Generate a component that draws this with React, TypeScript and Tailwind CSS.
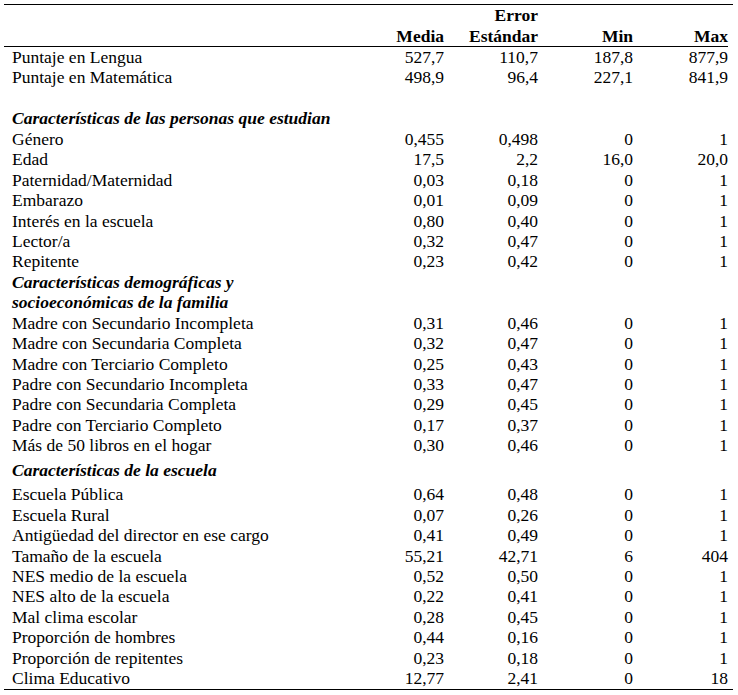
type Row =
  | { kind: "data"; label: string; values: string[] }
  | { kind: "blank" }
  | { kind: "section"; label: string; spaced?: boolean };

const rows: Row[] = [
  { kind: "data", label: "Puntaje en Lengua", values: ["527,7", "110,7", "187,8", "877,9"] },
  { kind: "data", label: "Puntaje en Matemática", values: ["498,9", "96,4", "227,1", "841,9"] },
  { kind: "blank" },
  { kind: "section", label: "Características de las personas que estudian" },
  { kind: "data", label: "Género", values: ["0,455", "0,498", "0", "1"] },
  { kind: "data", label: "Edad", values: ["17,5", "2,2", "16,0", "20,0"] },
  { kind: "data", label: "Paternidad/Maternidad", values: ["0,03", "0,18", "0", "1"] },
  { kind: "data", label: "Embarazo", values: ["0,01", "0,09", "0", "1"] },
  { kind: "data", label: "Interés en la escuela", values: ["0,80", "0,40", "0", "1"] },
  { kind: "data", label: "Lector/a", values: ["0,32", "0,47", "0", "1"] },
  { kind: "data", label: "Repitente", values: ["0,23", "0,42", "0", "1"] },
  { kind: "section", label: "Características demográficas y" },
  { kind: "section", label: "socioeconómicas de la familia" },
  { kind: "data", label: "Madre con Secundario Incompleta", values: ["0,31", "0,46", "0", "1"] },
  { kind: "data", label: "Madre con Secundaria Completa", values: ["0,32", "0,47", "0", "1"] },
  { kind: "data", label: "Madre con Terciario Completo", values: ["0,25", "0,43", "0", "1"] },
  { kind: "data", label: "Padre con Secundario Incompleta", values: ["0,33", "0,47", "0", "1"] },
  { kind: "data", label: "Padre con Secundaria Completa", values: ["0,29", "0,45", "0", "1"] },
  { kind: "data", label: "Padre con Terciario Completo", values: ["0,17", "0,37", "0", "1"] },
  { kind: "data", label: "Más de 50 libros en el hogar", values: ["0,30", "0,46", "0", "1"] },
  { kind: "section", label: "Características de la escuela", spaced: true },
  { kind: "data", label: "Escuela Pública", values: ["0,64", "0,48", "0", "1"] },
  { kind: "data", label: "Escuela Rural", values: ["0,07", "0,26", "0", "1"] },
  { kind: "data", label: "Antigüedad del director en ese cargo", values: ["0,41", "0,49", "0", "1"] },
  { kind: "data", label: "Tamaño de la escuela", values: ["55,21", "42,71", "6", "404"] },
  { kind: "data", label: "NES medio de la escuela", values: ["0,52", "0,50", "0", "1"] },
  { kind: "data", label: "NES alto de la escuela", values: ["0,22", "0,41", "0", "1"] },
  { kind: "data", label: "Mal clima escolar", values: ["0,28", "0,45", "0", "1"] },
  { kind: "data", label: "Proporción de hombres", values: ["0,44", "0,16", "0", "1"] },
  { kind: "data", label: "Proporción de repitentes", values: ["0,23", "0,18", "0", "1"] },
  { kind: "data", label: "Clima Educativo", values: ["12,77", "2,41", "0", "18"] },
];

const grid = "grid grid-cols-[346px_94px_94px_95px_95px]";

export default function App() {
  return (
    <div className="min-h-[695px] w-[738px] bg-white pt-[4px] font-['Liberation_Serif','Times_New_Roman',serif] text-[17.5px] leading-[20.45px] text-black">
      <div className="ml-[4px] w-[729px] border-y border-black pr-[5px]">
        {/* header */}
        <div className={`${grid} border-b border-black font-bold`}>
          <div />
          <div className="flex h-[41px] items-end justify-end">Media</div>
          <div className="flex h-[41px] flex-col items-end justify-end">
            <span>Error</span>
            <span>Estándar</span>
          </div>
          <div className="flex h-[41px] items-end justify-end">Min</div>
          <div className="flex h-[41px] items-end justify-end">Max</div>
        </div>

        {rows.map((row, i) => {
          if (row.kind === "blank") return <div key={i} className="h-[20.45px]" />;
          if (row.kind === "section")
            return (
              <div
                key={i}
                className={`${grid} ${row.spaced ? "py-[4px]" : ""} font-bold italic`}
              >
                <div className="col-span-5 h-[20.45px] whitespace-nowrap pl-[8px]">{row.label}</div>
              </div>
            );
          return (
            <div key={i} className={`${grid} h-[20.45px]`}>
              <div className="whitespace-nowrap pl-[8px]">{row.label}</div>
              {row.values.map((v, j) => (
                <div key={j} className="text-right">
                  {v}
                </div>
              ))}
            </div>
          );
        })}
      </div>
    </div>
  );
}
